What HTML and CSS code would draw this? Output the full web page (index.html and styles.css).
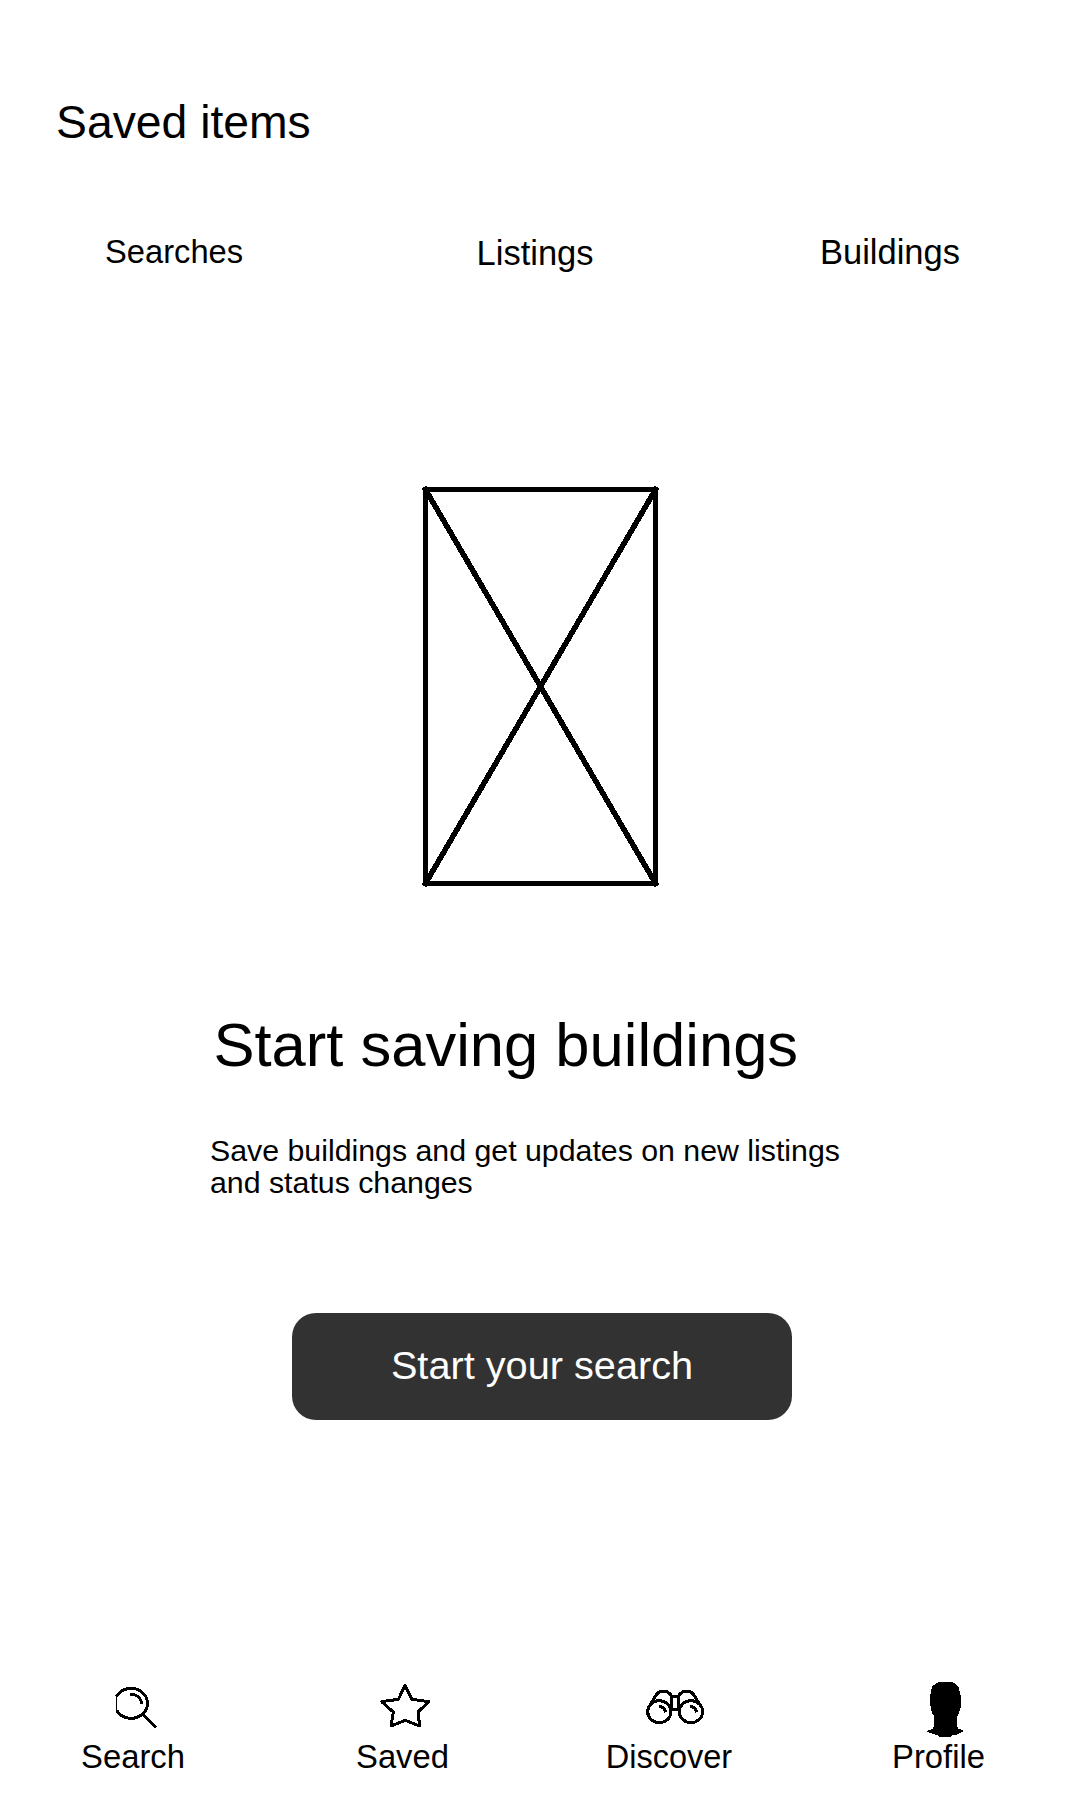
FILE: index.html
```html
<!DOCTYPE html>
<html lang="en">
<head>
<meta charset="utf-8">
<title>Saved items</title>
<link rel="stylesheet" href="styles.css">
</head>
<body>
<div class="screen">
  <h1 class="title">Saved items</h1>
  <nav class="tabs">
    <a class="tab tab-searches">Searches</a>
    <a class="tab tab-listings">Listings</a>
    <a class="tab tab-buildings">Buildings</a>
  </nav>
  <main class="empty">
    <svg class="placeholder" viewBox="0 0 240 404" fill="none" stroke="#000" stroke-width="5">
      <path d="M5.5 5.5H235.5V399.5H5.5Z"/>
      <path stroke-width="5.5" d="M4 3L237 402M237 3L4 402"/>
    </svg>
    <h2 class="headline">Start saving buildings</h2>
    <p class="description">Save buildings and get updates on new listings<br>and status changes</p>
    <button class="cta">Start your search</button>
  </main>
  <nav class="bottom-nav">
    <a class="item item-search">
      <svg class="icon" viewBox="0 0 210 225" fill="none" stroke="#000" stroke-width="9">
        <path d="M50 79A49 45 0 1 1 50 121"/>
        <path stroke-width="4" d="M50 76V124"/>
        <path d="M91 73C111 73 124 84 125 103M127 132L168 173"/>
      </svg>
      <span class="label">Search</span>
    </a>
    <a class="item item-saved">
      <svg class="icon" viewBox="0 0 210 225" fill="none" stroke="#000" stroke-width="9" stroke-linejoin="round">
        <path d="M105 47L126 88L176 95L144 126L149 168L106 151L63 168L70 126L35 95L85 88Z"/>
      </svg>
      <span class="label">Saved</span>
    </a>
    <a class="item item-discover">
      <svg class="icon icon-wide" viewBox="0 0 240 225" fill="none" stroke="#000" stroke-width="9">
        <ellipse cx="73" cy="125" rx="35" ry="33"/>
        <ellipse cx="168" cy="125" rx="35" ry="33"/>
        <path d="M46 104L63 75Q70 64 82 64H91Q105 67 109 79V119M194 104L177 75Q170 64 158 64H149Q135 67 131 79V119M109 78H131M107 119H133M72 109Q88 110 92 127M165 109Q181 110 185 127"/>
      </svg>
      <span class="label">Discover</span>
    </a>
    <a class="item item-profile">
      <svg class="icon" viewBox="0 0 210 225">
        <path d="M85 36H125L138 42L147 54L150 70L153 82L152 112L147 128L142 140L141 168L145 176L160 181V185L148 190L139 195H127L120 201H90L81 195L66 191L52 185V182L67 177L73 169L73 140L67 130L62 114L60 82L63 63L68 48Z"/>
      </svg>
      <span class="label">Profile</span>
    </a>
  </nav>
</div>
</body>
</html>
```
FILE: styles.css
```css
* { box-sizing: border-box; }

body {
  margin: 0;
  background: #fff;
  color: #000;
  font-family: "Liberation Sans", Arial, sans-serif;
}

h1, h2, p { margin: 0; font-weight: 400; }

.screen {
  width: 1080px;
  height: 1800px;
  padding-top: 96px;
  display: flex;
  flex-direction: column;
}

.title {
  margin-left: 56px;
  font-size: 46.3px;
  line-height: 52px;
}

.tabs {
  display: flex;
  justify-content: space-between;
  height: 41px;
  margin: 84px 120px 0 105px;
  line-height: 40px;
}

.tab { font-size: 34.5px; }
.tab-searches { font-size: 32.7px; }
.tab-listings { margin: 1px 0 0 7px; }

.empty {
  display: flex;
  flex-direction: column;
  align-items: center;
  margin-top: 211px;
}

.placeholder {
  width: 240px;
  height: 404px;
  shape-rendering: crispEdges;
}

.headline {
  align-self: flex-start;
  margin: 121px 0 0 213.5px;
  font-size: 61.5px;
  line-height: 72px;
  white-space: nowrap;
}

.description {
  align-self: flex-start;
  margin: 54px 0 0 210px;
  font-size: 30.3px;
  line-height: 32px;
  white-space: nowrap;
}

.cta {
  width: 500px;
  height: 107px;
  margin: 114px 0 0 4px;
  padding: 0 0 2px;
  border: 0;
  border-radius: 24px;
  background: #323232;
  color: #fff;
  font-family: inherit;
  font-size: 39.7px;
}

.bottom-nav {
  display: grid;
  grid-template-columns: 266px 266px 272px 276px;
  margin-top: 250px;
}

.item {
  display: flex;
  flex-direction: column;
  align-items: center;
}

.icon {
  width: 70px;
  height: 75px;
  shape-rendering: crispEdges;
}

.icon-wide { width: 80px; }

.label {
  margin-top: -8px;
  font-size: 32.8px;
  line-height: 40px;
  white-space: nowrap;
}

.item-search .icon { margin-left: 4px; }
.item-saved .icon { margin-left: 12px; }
.item-saved .label { margin-left: 7px; }
.item-discover .icon { margin-left: 14px; }
.item-discover .label { margin-left: 2px; font-size: 32.5px; }
.item-profile .icon { margin-left: 5px; }
.item-profile .label { margin-left: -7px; }
```
